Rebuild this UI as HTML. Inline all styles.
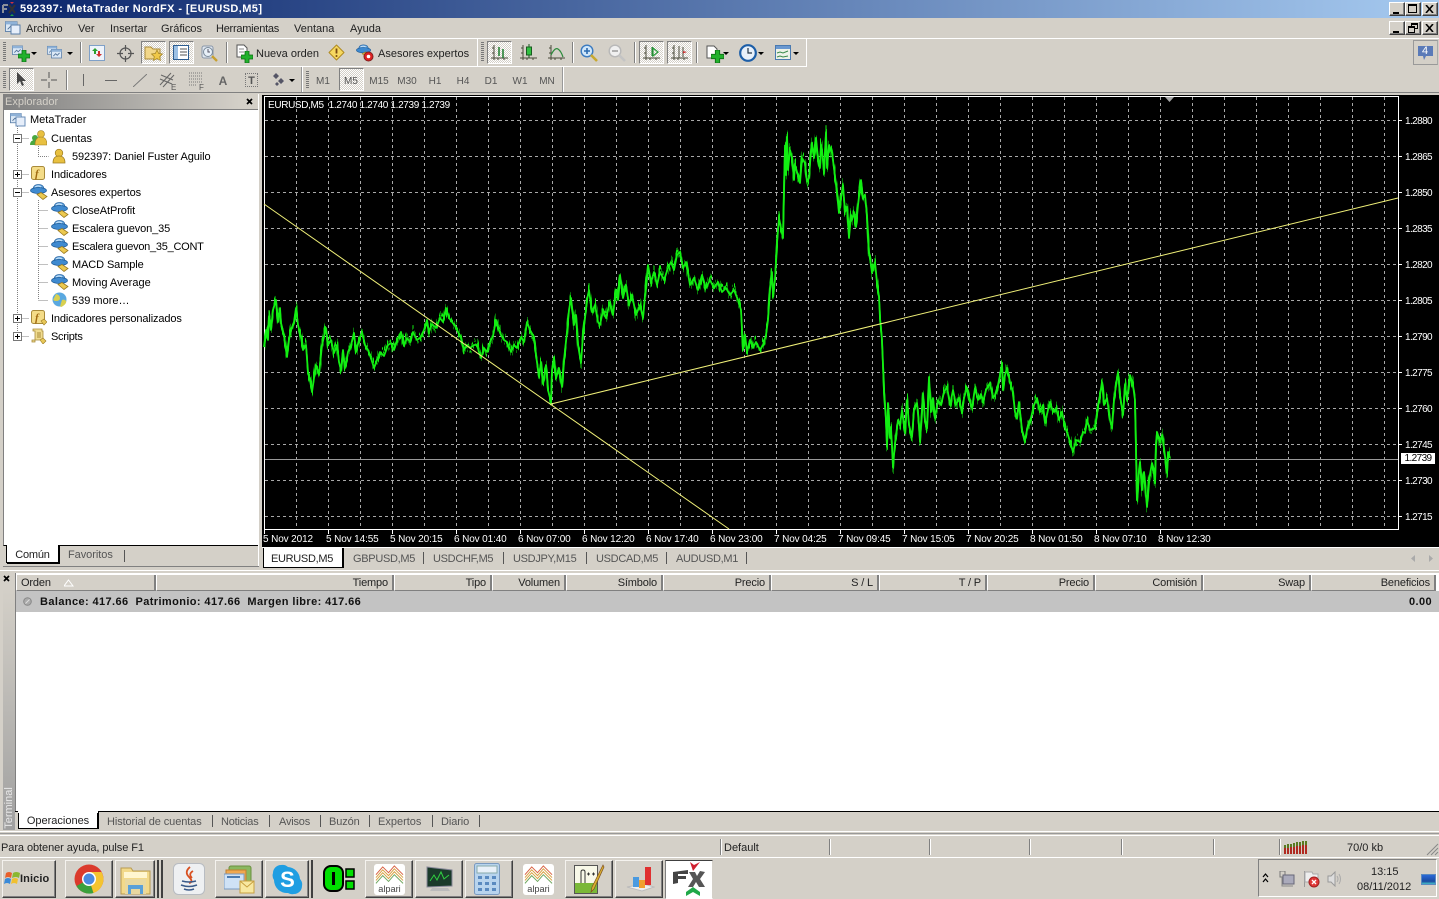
<!DOCTYPE html>
<html lang="es"><head><meta charset="utf-8"><title>MetaTrader</title>
<style>
html,body{margin:0;padding:0;width:1439px;height:899px;overflow:hidden;background:#d4d0c8}
body{position:relative;font:11px/14px "Liberation Sans",Arial,sans-serif;color:#000}
div,span,svg{position:absolute;box-sizing:border-box}
.t{white-space:nowrap;height:14px;line-height:14px;margin-top:1px}
.g{color:#555}
.r{text-align:right}
.c{text-align:center}
.cap{letter-spacing:-.5px}
.px{color:#fff;font-size:10px;letter-spacing:-.6px}
.dt{color:#fff;font-size:10px;letter-spacing:-.12px}
.wb{width:16px;height:14px;background:#d4d0c8;border:1px solid;border-color:#fff #404040 #404040 #fff;box-shadow:inset -1px -1px #808080}
.sep{width:2px;background:#808080;border-right:1px solid #fff}
.grip{width:3px;background:repeating-linear-gradient(#777 0 1px,#d4d0c8 1px 2px)}
.pr{border:1px solid;border-color:#808080 #fff #fff #808080;background:repeating-conic-gradient(#fff 0 25%,#d4d0c8 0 50%) 0 0/2px 2px}
.btn{border:1px solid;border-color:#f4f2ee #404040 #404040 #f4f2ee;box-shadow:inset -1px -1px #808080;background:#d4d0c8}
.hd{top:575px;height:16px;border-right:2px solid #808080;border-left:1px solid #fff;border-bottom:1px solid #808080;background:#d4d0c8;text-align:right;padding-right:4px;line-height:16px;color:#222;letter-spacing:-.15px}
.ar{width:0;height:0;border:3px solid transparent;border-top:3px solid #000;border-bottom:0}
.dv{width:1px;height:12px;background:#555}
</style></head>
<body>
<svg width="0" height="0" style="left:0;top:0">
<defs>
<symbol id="ea" viewBox="0 0 18 16"><path d="M3 6Q3 .5 8.500 .5T14 6Z" fill="#6fb0e6" stroke="#2f6aa6" stroke-width=".8"/><ellipse cx="8.500" cy="6.500" rx="8" ry="3" fill="#3f8ad0" stroke="#1d5a96" stroke-width=".7"/><path d="M5 3q3-2 6 0" stroke="#cfe6fa" fill="none"/><path d="M7 10.500l4-2 6 4-4 3z" fill="#ecc950" stroke="#9a7a20" stroke-width=".8"/></symbol>
<symbol id="plus" viewBox="0 0 12 12"><path d="M4 0h4v4h4v4H8v4H4V8H0V4h4z" fill="#22b12c" stroke="#0c6c14" stroke-width=".8"/></symbol>
<symbol id="chartdoc" viewBox="0 0 18 16"><rect x=".5" y="1.5" width="13" height="11" fill="#dbe8f6" stroke="#5a7ea8"/><rect x=".5" y="1.5" width="13" height="3" fill="#8fb2d8"/><path d="M3 10l3-3 2 2 3-3" stroke="#4a6a90" fill="none"/></symbol>
<symbol id="axis" viewBox="0 0 18 18"><path d="M3 1v15M0 14h17" stroke="#4a4a3a" fill="none"/><path d="M1 4h2M1 9h2M7 16v-2M13 16v-2" stroke="#4a4a3a"/></symbol>
<symbol id="alp" viewBox="0 0 32 32"><rect width="32" height="32" rx="3" fill="#fff"/><path d="M2 14l7-8 6 6 6-7 9 9M2 17l7-8 6 6 6-7 9 9" fill="none" stroke="#d8a040"/><path d="M2 11l7-8 6 6 6-7 9 9" fill="none" stroke="#d86040"/><path d="M2 20l7-8 6 6 6-7 9 9" fill="none" stroke="#70a860"/><text x="16" y="29" text-anchor="middle" font-family="Liberation Sans" font-size="9.5" fill="#444">alpari</text></symbol>
<filter id="jit" filterUnits="userSpaceOnUse" x="264" y="97" width="1000" height="432" color-interpolation-filters="sRGB"><feTurbulence type="turbulence" baseFrequency="0.55 0.002" numOctaves="2" seed="7" result="n"/><feColorMatrix in="n" type="matrix" values="2 0 0 0 0 0 0 0 0 .5 0 0 1 0 0 0 0 0 0 1" result="m"/><feDisplacementMap in="SourceGraphic" in2="m" scale="12" xChannelSelector="G" yChannelSelector="R"/></filter>
</defs></svg>

<!-- title bar -->
<div style="left:0;top:0;width:1439px;height:18px;background:linear-gradient(90deg,#0a246a,#a6caf0)"></div>
<svg style="left:1px;top:1px" width="17" height="16" viewBox="0 0 17 16"><path d="M2 4h5M2 4v8M2 8h4" stroke="#8a8f9a" stroke-width="2" fill="none"/><path d="M8 4l6 8M14 4l-6 8" stroke="#333" stroke-width="2"/><path d="M9 1l2 2 2-2z" fill="#d03040"/><path d="M9 15l2-2 2 2z" fill="#20a040"/></svg>
<div class="t" style="left:20px;top:1px;color:#fff;font-weight:bold;letter-spacing:.4px">592397: MetaTrader NordFX - [EURUSD,M5]</div>
<div class="wb" style="left:1389px;top:2px"><span style="left:3px;top:9px;width:6px;height:2px;background:#000"></span></div>
<div class="wb" style="left:1405px;top:2px"><span style="left:2px;top:1px;width:9px;height:9px;border:1px solid #000;border-top-width:2px"></span></div>
<div class="wb" style="left:1422px;top:2px"><svg style="left:2px;top:2px" width="9" height="8"><path d="M1 0l7 8M8 0l-7 8" stroke="#000" stroke-width="1.600"/></svg></div>

<!-- menu -->
<svg style="left:5px;top:20px" width="16" height="16" viewBox="0 0 16 16"><use href="#chartdoc" width="16" height="15"/><rect x="6" y="5" width="9" height="9" fill="#e6eefa" stroke="#5a7ea8"/></svg>
<div class="t" style="left:26px;top:21px;color:#222">Archivo</div>
<div class="t" style="left:78px;top:21px;color:#222">Ver</div>
<div class="t" style="left:110px;top:21px;color:#222">Insertar</div>
<div class="t" style="left:161px;top:21px;color:#222">Gráficos</div>
<div class="t" style="left:216px;top:21px;color:#222;letter-spacing:-.25px">Herramientas</div>
<div class="t" style="left:294px;top:21px;color:#222">Ventana</div>
<div class="t" style="left:350px;top:21px;color:#222">Ayuda</div>
<div class="wb" style="left:1389px;top:21px;height:14px"><span style="left:3px;top:9px;width:6px;height:2px;background:#000"></span></div>
<div class="wb" style="left:1405px;top:21px"><span style="left:5px;top:1px;width:7px;height:6px;border:1px solid #000;border-top-width:2px"></span><span style="left:2px;top:4px;width:7px;height:7px;border:1px solid #000;border-top-width:2px;background:#d4d0c8"></span></div>
<div class="wb" style="left:1422px;top:21px"><svg style="left:2px;top:2px" width="9" height="8"><path d="M1 0l7 8M8 0l-7 8" stroke="#000" stroke-width="1.600"/></svg></div>

<!-- toolbar lines -->
<div style="left:0;top:38px;width:1439px;height:1px;background:#fff"></div>
<div style="left:806px;top:39px;width:1px;height:28px;background:#fff"></div>
<div style="left:0;top:66px;width:806px;height:1px;background:#fff"></div>
<div style="left:562px;top:67px;width:2px;height:25px;background:#fff;border-left:1px solid #999"></div>
<div style="left:0;top:92px;width:1439px;height:1px;background:#808080"></div>

<div class="grip" style="left:3px;top:42px;height:20px"></div>
<svg style="left:12px;top:44px" width="18" height="18"><use href="#chartdoc" width="14" height="14"/><use href="#plus" x="6" y="6" width="12" height="12"/></svg><div class="ar" style="left:31px;top:52px"></div>
<svg style="left:47px;top:45px" width="18" height="16"><use href="#chartdoc" width="13" height="12"/><use href="#chartdoc" x="4" y="3" width="14" height="13"/></svg><div class="ar" style="left:67px;top:52px"></div>
<div class="sep" style="left:80px;top:42px;height:21px"></div>
<svg style="left:89px;top:45px" width="16" height="16"><rect x=".5" y=".5" width="15" height="15" fill="#eef3fa" stroke="#7fa0c8"/><path d="M6 3l-3 3h2v3h2V6h2z" fill="#2aa030"/><path d="M10 12l3-3h-2V6H9v3H7z" fill="#d03030"/></svg>
<svg style="left:117px;top:45px" width="17" height="17"><circle cx="8.500" cy="8.500" r="5.500" fill="none" stroke="#555" stroke-width="1.200"/><path d="M8.500 0v6M8.500 11v6M0 8.500h6M11 8.500h6" stroke="#555" stroke-width="1.200"/></svg>
<div class="pr" style="left:141px;top:41px;width:25px;height:23px"></div>
<svg style="left:144px;top:44px" width="20" height="18"><path d="M1 3h6l2 2h7v10H1z" fill="#f2d78a" stroke="#a88a3a"/><path d="M13 6l1.700 3.500 3.800.5-2.800 2.600.7 3.800-3.400-1.900-3.400 1.900.7-3.800-2.800-2.600 3.800-.5z" fill="#f0c848" stroke="#a08020" stroke-width=".7"/></svg>
<div class="pr" style="left:169px;top:41px;width:25px;height:23px"></div>
<svg style="left:173px;top:45px" width="17" height="16"><rect x=".5" y=".5" width="15" height="14" fill="#fff" stroke="#2c5c90"/><rect x="1" y="1" width="4" height="13" fill="#9cc0e4"/><path d="M7 4h7M7 7h7M7 10h7" stroke="#555"/></svg>
<svg style="left:201px;top:45px" width="18" height="18"><rect x="1" y="1" width="11" height="12" rx="2" fill="#dfe6ee" stroke="#8896a8"/><circle cx="7" cy="7" r="4.500" fill="#e8f0f8" stroke="#7a8a9a"/><path d="M7 4v3h2" stroke="#556" fill="none"/><path d="M11 11l5 5" stroke="#c8a030" stroke-width="2.400"/></svg>
<div class="sep" style="left:226px;top:42px;height:21px"></div>
<svg style="left:236px;top:44px" width="17" height="19"><path d="M1 1h7l3 3v9H1z" fill="#fff" stroke="#555"/><path d="M3 5h5M3 8h5" stroke="#888"/><use href="#plus" x="5" y="7" width="12" height="12"/></svg>
<div class="t" style="left:256px;top:46px;color:#222">Nueva orden</div>
<svg style="left:328px;top:44px" width="17" height="17"><path d="M8.500 1l7.500 7.500-7.500 7.500L1 8.500z" fill="#f6d860" stroke="#b08a20" stroke-linejoin="round"/><path d="M8.500 4.500v5" stroke="#7a4a10" stroke-width="1.800"/><circle cx="8.500" cy="12" r="1" fill="#7a4a10"/></svg>
<svg style="left:356px;top:44px" width="18" height="18"><use href="#ea" width="16" height="15"/><circle cx="12.500" cy="12.500" r="4.500" fill="#e02020" stroke="#802020"/><circle cx="12.500" cy="12.500" r="1.800" fill="#fff"/></svg>
<div class="t" style="left:378px;top:46px;color:#222">Asesores expertos</div>
<div style="left:477px;top:39px;width:1px;height:27px;background:#fff"></div>
<div class="grip" style="left:481px;top:42px;height:20px"></div>
<div class="pr" style="left:487px;top:41px;width:25px;height:23px"></div>
<svg style="left:491px;top:44px" width="18" height="18"><use href="#axis" width="18" height="18"/><path d="M8 3v9M12 5v9" stroke="#1a7a2a" stroke-width="1.500"/></svg>
<svg style="left:520px;top:44px" width="18" height="18"><use href="#axis" width="18" height="18"/><rect x="6.500" y="3" width="5" height="8" fill="#30c040" stroke="#1a5a20"/><path d="M9 0v3M9 11v3" stroke="#1a5a20"/></svg>
<svg style="left:548px;top:44px" width="18" height="18"><use href="#axis" width="18" height="18"/><path d="M3 11Q7 3 10 5t5 8" fill="none" stroke="#2a8a3a" stroke-width="1.200"/></svg>
<div class="sep" style="left:572px;top:42px;height:21px"></div>
<svg style="left:580px;top:44px" width="18" height="19"><circle cx="7" cy="7" r="5.800" fill="#cfe6fa" stroke="#3a7ac0" stroke-width="1.400"/><path d="M4 7h6M7 4v6" stroke="#2a6ab0" stroke-width="1.600"/><path d="M11 11l6 6" stroke="#c8a830" stroke-width="2.600"/></svg>
<svg style="left:608px;top:44px" width="18" height="19"><circle cx="7" cy="7" r="5.800" fill="#f0f0f0" stroke="#b8b8b8" stroke-width="1.400"/><path d="M4 7h6" stroke="#a0a0a0" stroke-width="1.600"/><path d="M11 11l6 6" stroke="#c4c4c4" stroke-width="2.600"/></svg>
<div class="sep" style="left:634px;top:42px;height:21px"></div>
<div class="pr" style="left:639px;top:41px;width:25px;height:23px"></div>
<svg style="left:643px;top:44px" width="18" height="18"><use href="#axis" width="18" height="18"/><path d="M9 3v9" stroke="#1a7a2a"/><path d="M10 4l5 4-5 4z" fill="none" stroke="#2a9a3a" stroke-width="1.200"/></svg>
<div class="pr" style="left:667px;top:41px;width:25px;height:23px"></div>
<svg style="left:671px;top:44px" width="18" height="18"><use href="#axis" width="18" height="18"/><path d="M8 2v12M12 3v10" stroke="#4a4a3a"/><path d="M12 7l4 1-4 1.500z" fill="#c83030"/></svg>
<div class="sep" style="left:696px;top:42px;height:21px"></div>
<svg style="left:706px;top:44px" width="20" height="20"><path d="M1 2h7l3 3v9H1z" fill="#fff" stroke="#555"/><use href="#plus" x="5" y="6" width="13" height="13"/></svg><div class="ar" style="left:723px;top:52px"></div>
<svg style="left:739px;top:44px" width="18" height="18"><circle cx="9" cy="9" r="7.800" fill="#e8f0fa" stroke="#1c5ea8" stroke-width="2.200"/><path d="M9 4v5h4" stroke="#234" fill="none" stroke-width="1.200"/></svg><div class="ar" style="left:758px;top:52px"></div>
<svg style="left:775px;top:45px" width="17" height="15"><rect x=".5" y=".5" width="15" height="14" fill="#eef2e8" stroke="#4a7ab0"/><rect x="1" y="1" width="14" height="3" fill="#6a98d0"/><path d="M2 8l3-1 3 1 5-2M2 12l3-1 3 1 5-1" stroke="#3a8a4a" fill="none"/></svg><div class="ar" style="left:793px;top:52px"></div>

<div style="left:1413px;top:40px;width:25px;height:25px;border:1px solid #999;border-right-color:#aaa"></div>
<svg style="left:1417px;top:45px" width="17" height="16"><path d="M1 1h15v10H9l-2 4-1-4H1z" fill="#5a7ab8"/></svg>
<div class="t c" style="left:1417px;top:43px;width:16px;color:#fff;font-size:11px">4</div>

<!-- toolbar 2 -->
<div class="grip" style="left:3px;top:71px;height:18px"></div>
<div class="pr" style="left:9px;top:68px;width:25px;height:23px"></div>
<svg style="left:16px;top:72px" width="12" height="15"><path d="M1 0v12l3-3 2 5 2-1-2-4h4z" fill="#444"/></svg>
<svg style="left:41px;top:72px" width="16" height="16"><path d="M8 0v6M8 10v6M0 8h6M10 8h6" stroke="#555"/></svg>
<div class="sep" style="left:66px;top:70px;height:20px"></div>
<div style="left:83px;top:74px;width:1px;height:12px;background:#666"></div>
<div style="left:105px;top:80px;width:12px;height:1px;background:#666"></div>
<svg style="left:133px;top:74px" width="14" height="13"><path d="M0 13L14 0" stroke="#777"/></svg>
<svg style="left:159px;top:71px" width="18" height="20"><path d="M1 14L12 2M4 16L15 4M1 8l12 5M2 4l12 5" stroke="#666" fill="none"/><text x="12" y="19" font-size="8" fill="#555" font-family="Liberation Sans">E</text></svg>
<svg style="left:187px;top:72px" width="18" height="19"><path d="M2 1h13M2 4h13M2 7h13M2 10h13M2 13h8" stroke="#777" stroke-dasharray="1 1"/><text x="12" y="18" font-size="8" fill="#555" font-family="Liberation Sans">F</text></svg>
<div class="t c" style="left:216px;top:73px;width:14px;font-weight:bold;font-size:12px;color:#666">A</div>
<div style="left:245px;top:73px;width:13px;height:14px;border:1px dotted #777"></div>
<div class="t c" style="left:245px;top:73px;width:13px;font-weight:bold;font-size:11px;color:#555">T</div>
<svg style="left:273px;top:73px" width="14" height="14"><path d="M3 0l3 3-3 3-3-3zM8 5l3 3-3 3-3-3zM4 9l2 2-2 2-2-2z" fill="#556"/></svg><div class="ar" style="left:289px;top:79px"></div>
<div style="left:301px;top:67px;width:2px;height:25px;background:#fff;border-left:1px solid #999"></div>
<div class="grip" style="left:306px;top:71px;height:18px"></div>
<div class="pr" style="left:339px;top:68px;width:25px;height:23px"></div>
<div class="t g c" style="left:310px;top:74px;width:26px;font-size:10px">M1</div>
<div class="t g c" style="left:338px;top:74px;width:26px;font-size:10px">M5</div>
<div class="t g c" style="left:366px;top:74px;width:26px;font-size:10px">M15</div>
<div class="t g c" style="left:394px;top:74px;width:26px;font-size:10px">M30</div>
<div class="t g c" style="left:422px;top:74px;width:26px;font-size:10px">H1</div>
<div class="t g c" style="left:450px;top:74px;width:26px;font-size:10px">H4</div>
<div class="t g c" style="left:478px;top:74px;width:26px;font-size:10px">D1</div>
<div class="t g c" style="left:507px;top:74px;width:26px;font-size:10px">W1</div>
<div class="t g c" style="left:534px;top:74px;width:26px;font-size:10px">MN</div>

<!-- explorer -->
<div style="left:3px;top:94px;width:239px;height:15px;background:linear-gradient(90deg,#808080,#d4d0c8)"></div>
<div class="t" style="left:5px;top:94px;color:#d4d0c8">Explorador</div>
<svg style="left:246px;top:98px" width="8" height="8"><path d="M1 1l5 5M6 1l-5 5" stroke="#000" stroke-width="1.700"/></svg>
<div style="left:3px;top:109px;width:256px;height:437px;background:#fff;border:1px solid;border-color:#808080 #fff #000 #808080"></div>
<div style="left:258px;top:94px;width:1px;height:472px;background:#fff"></div>
<!-- tree lines -->
<svg style="left:4px;top:110px" width="70" height="240">
<g stroke="#808080" stroke-dasharray="1 1" fill="none"><path d="M13.500 14v216M13.500 28.500h12M13.500 64.500h12M13.500 82.500h12M13.500 208.500h12M13.500 226.500h12M34.500 36v10.500h10M34.500 90v100M34.500 100.500h10M34.500 118.500h10M34.500 136.500h10M34.500 154.500h10M34.500 172.500h10M34.500 190.500h10"/></g>
</svg>
<svg style="left:13px;top:134px" width="9" height="9"><rect x=".5" y=".5" width="8" height="8" fill="#fff" stroke="#777"/><path d="M2 4.500h5" stroke="#000"/></svg>
<svg style="left:13px;top:170px" width="9" height="9"><rect x=".5" y=".5" width="8" height="8" fill="#fff" stroke="#777"/><path d="M2 4.500h5M4.500 2v5" stroke="#000"/></svg>
<svg style="left:13px;top:188px" width="9" height="9"><rect x=".5" y=".5" width="8" height="8" fill="#fff" stroke="#777"/><path d="M2 4.500h5" stroke="#000"/></svg>
<svg style="left:13px;top:314px" width="9" height="9"><rect x=".5" y=".5" width="8" height="8" fill="#fff" stroke="#777"/><path d="M2 4.500h5M4.500 2v5" stroke="#000"/></svg>
<svg style="left:13px;top:332px" width="9" height="9"><rect x=".5" y=".5" width="8" height="8" fill="#fff" stroke="#777"/><path d="M2 4.500h5M4.500 2v5" stroke="#000"/></svg>
<svg style="left:10px;top:112px" width="16" height="15"><use href="#chartdoc" width="15" height="14"/><rect x="6" y="5" width="9" height="9" fill="#e6eefa" stroke="#6a8eb8"/></svg>
<svg style="left:29px;top:129px" width="18" height="17"><circle cx="6" cy="9" r="3" fill="#4aa840"/><path d="M1 16q0-5 5-5t5 5z" fill="#4aa840"/><circle cx="12" cy="5" r="3.500" fill="#e8c040" stroke="#9a7a20" stroke-width=".6"/><path d="M6 16q0-8 6-8t6 8z" fill="#e8c040" stroke="#9a7a20" stroke-width=".6"/></svg>
<svg style="left:52px;top:148px" width="15" height="16"><circle cx="7" cy="5" r="3.800" fill="#e8c040" stroke="#9a7a20" stroke-width=".7"/><path d="M1 15q0-7 6-7t6 7z" fill="#e8c040" stroke="#9a7a20" stroke-width=".7"/></svg>
<svg style="left:31px;top:166px" width="15" height="15"><rect x=".5" y=".5" width="13" height="13" rx="2" fill="#f4dc88" stroke="#a88a3a"/><text x="4" y="11" font-family="Liberation Serif" font-style="italic" font-weight="bold" font-size="11" fill="#a06a10">f</text></svg>
<svg style="left:30px;top:184px" width="18" height="16"><use href="#ea" width="18" height="16"/></svg>
<svg style="left:51px;top:202px" width="18" height="16"><use href="#ea" width="18" height="16"/></svg>
<svg style="left:51px;top:220px" width="18" height="16"><use href="#ea" width="18" height="16"/></svg>
<svg style="left:51px;top:238px" width="18" height="16"><use href="#ea" width="18" height="16"/></svg>
<svg style="left:51px;top:256px" width="18" height="16"><use href="#ea" width="18" height="16"/></svg>
<svg style="left:51px;top:274px" width="18" height="16"><use href="#ea" width="18" height="16"/></svg>
<svg style="left:52px;top:292px" width="15" height="15"><circle cx="7.500" cy="7.500" r="7" fill="#5aa8e0"/><path d="M4 2q4 1 4 4t-4 3-2-3zM10 8q3-1 4 1t-3 5-2-3z" fill="#d8d050"/></svg>
<svg style="left:31px;top:310px" width="16" height="16"><rect x=".5" y=".5" width="13" height="13" rx="2" fill="#f4dc88" stroke="#a88a3a"/><text x="4" y="11" font-family="Liberation Serif" font-style="italic" font-weight="bold" font-size="11" fill="#a06a10">f</text><path d="M10 11l3-2 3 3-3 3z" fill="#e8c858" stroke="#9a7a20" stroke-width=".6"/></svg>
<svg style="left:31px;top:328px" width="16" height="16"><path d="M2 1h9v2h1v9H4v2H1v-2h3V3H2z" fill="#f0dc90" stroke="#a88a3a" stroke-width=".8"/><path d="M6 5h4M6 7h4M6 9h4" stroke="#a88a3a"/><path d="M9 12l3-2 3 3-3 3z" fill="#e8c858" stroke="#9a7a20" stroke-width=".6"/></svg>
<div class="t" style="left:30px;top:112px">MetaTrader</div>
<div class="t" style="left:51px;top:131px">Cuentas</div>
<div class="t" style="left:72px;top:149px;letter-spacing:-.1px">592397: Daniel Fuster Aguilo</div>
<div class="t" style="left:51px;top:167px;letter-spacing:-.1px">Indicadores</div>
<div class="t" style="left:51px;top:185px;letter-spacing:-.06px">Asesores expertos</div>
<div class="t" style="left:72px;top:203px;letter-spacing:-.08px">CloseAtProfit</div>
<div class="t" style="left:72px;top:221px;letter-spacing:-.12px">Escalera guevon_35</div>
<div class="t" style="left:72px;top:239px;letter-spacing:-.26px">Escalera guevon_35_CONT</div>
<div class="t" style="left:72px;top:257px;letter-spacing:-.1px">MACD Sample</div>
<div class="t" style="left:72px;top:275px">Moving Average</div>
<div class="t" style="left:72px;top:293px">539 more…</div>
<div class="t" style="left:51px;top:311px;letter-spacing:-.12px">Indicadores personalizados</div>
<div class="t" style="left:51px;top:329px;letter-spacing:-.3px">Scripts</div>
<!-- explorer tabs -->
<div style="left:6px;top:545px;width:53px;height:18px;background:#fff;border:1px solid #000;border-top:0;box-shadow:1px 1px #000"></div>
<div class="t c" style="left:6px;top:547px;width:53px;color:#222;letter-spacing:-.2px">Común</div>
<div class="t g" style="left:68px;top:547px;letter-spacing:-.05px">Favoritos</div>
<div class="dv" style="left:124px;top:550px"></div>
<div style="left:3px;top:566px;width:256px;height:1px;background:#808080"></div>

<!-- chart -->
<div style="left:262px;top:95px;width:1177px;height:452px;background:#000"></div>
<svg style="left:262px;top:95px" width="1177" height="452" viewBox="262 95 1177 452">
<rect x="264.500" y="96.500" width="1134" height="433" fill="none" stroke="#fff"/>
<g stroke="#a8a8a8" stroke-dasharray="3 3" shape-rendering="crispEdges" fill="none">
<path d="M265 120.500H1398M265 156.500H1398M265 192.500H1398M265 228.500H1398M265 264.500H1398M265 300.500H1398M265 336.500H1398M265 372.500H1398M265 408.500H1398M265 444.500H1398M265 480.500H1398M265 516.500H1398"/>
<path d="M296.500 97V529M328.500 97V529M360.500 97V529M392.500 97V529M424.500 97V529M456.500 97V529M488.500 97V529M520.500 97V529M552.500 97V529M584.500 97V529M616.500 97V529M648.500 97V529M680.500 97V529M712.500 97V529M744.500 97V529M776.500 97V529M808.500 97V529M840.500 97V529M872.500 97V529M904.500 97V529M936.500 97V529M968.500 97V529M1000.500 97V529M1032.500 97V529M1064.500 97V529M1096.500 97V529M1128.500 97V529M1160.500 97V529M1192.500 97V529M1224.500 97V529M1256.500 97V529M1288.500 97V529M1320.500 97V529M1352.500 97V529M1384.500 97V529"/>
</g>
<g stroke="#fff" shape-rendering="crispEdges"><path d="M264.500 530v4M328.500 530v4M392.500 530v4M456.500 530v4M520.500 530v4M584.500 530v4M648.500 530v4M712.500 530v4M776.500 530v4M840.500 530v4M904.500 530v4M968.500 530v4M1032.500 530v4M1096.500 530v4M1160.500 530v4"/><path d="M1399 120.500h3M1399 156.500h3M1399 192.500h3M1399 228.500h3M1399 264.500h3M1399 300.500h3M1399 336.500h3M1399 372.500h3M1399 408.500h3M1399 444.500h3M1399 480.500h3M1399 516.500h3"/></g>
<path d="M265 459.500H1398" stroke="#999" shape-rendering="crispEdges"/>
<path d="M1165 97h9l-4.500 5z" fill="#a8a8a8"/>
<g fill="none" stroke="#12ee12" stroke-width="1.800" stroke-linejoin="round">
<polyline id="gl" points="264,347 266,330 268,340 269,317 271,330 273,310 276,300 278,322 280,308 281,323 284,335 286,350 287,357 289,340 291,330 294,322 296,308 298,325 301,337 303,350 306,345 308,372 310,380 312,392 314,378 316,365 319,375 322,345 326,328 328,345 331,340 334,353 337,345 339,362 341,370 343,350 345,368 348,352 351,345 354,333 356,352 359,340 362,332 365,345 368,350 371,358 374,368 377,360 380,352 384,356 388,345 391,343 394,350 398,338 401,332 404,346 407,338 410,342 413,332 417,340 420,338 424,330 427,320 429,332 432,324 436,328 440,318 443,322 446,308 449,318 452,322 455,326 458,332 461,337 464,350 467,345 470,348 474,345 477,345 479,352 481,358 484,348 487,352 490,342 493,336 496,320 498,328 501,335 504,340 507,342 511,352 514,345 517,348 521,337 524,342 527,322 530,330 534,337 536,355 539,377 541,362 543,384 546,365 548,390 551,402 552,370 554,357 556,378 559,368 562,387 564,360 567,332 569,310 571,298 574,325 576,315 578,345 581,363 583,335 585,318 587,300 589,290 592,312 595,305 598,322 600,325 603,310 606,318 610,302 613,315 616,290 618,300 620,275 623,298 626,285 629,305 632,295 636,315 640,305 643,318 646,285 648,265 651,282 654,272 657,285 660,272 664,280 668,268 671,262 674,270 677,255 680,252 683,268 686,262 690,285 694,278 698,290 702,275 706,288 710,280 714,288 718,282 722,292 726,288 730,295 734,290 738,300 741,310 743,350 745,335 747,352 750,340 753,348 756,342 760,350 763,345 766,335 768,320 770,290 772,272 773,295 775,280 777,243 779,218 781,228 783,238 785,148 786,175 787,137 788,170 790,150 792,157 794,180 795,165 797,172 800,183 802,158 805,163 807,182 809,178 811,150 812,143 814,158 816,138 818,158 820,168 821,145 822,150 824,172 826,132 827,168 829,145 832,153 834,168 837,193 839,213 841,198 843,185 845,212 847,207 849,238 851,215 852,220 854,212 856,227 858,205 861,180 863,198 865,195 867,215 868,237 869,253 871,265 872,273 875,262 877,283 879,297 880,318 882,340 884,390 886,420 887,447 888,403 890,438 891,428 893,467 895,443 898,420 900,425 902,410 905,433 907,400 909,425 912,437 914,410 917,403 919,425 920,442 923,393 925,420 927,428 929,377 931,412 933,398 935,418 938,400 941,405 944,392 947,387 950,405 953,390 956,405 959,398 962,413 964,398 967,388 970,402 972,408 975,388 978,400 981,394 983,402 986,390 990,383 993,398 995,395 998,385 1000,375 1002,363 1003,390 1005,375 1007,368 1010,382 1013,393 1015,412 1017,417 1019,402 1022,430 1025,440 1028,425 1031,418 1034,405 1037,398 1040,412 1043,405 1045,423 1048,410 1050,402 1053,412 1056,408 1059,420 1062,412 1065,427 1068,435 1071,445 1073,452 1076,440 1080,442 1083,432 1085,433 1087,420 1090,430 1095,428 1098,405 1100,395 1102,382 1104,405 1107,398 1110,420 1112,428 1114,400 1116,385 1118,372 1120,395 1123,415 1125,385 1127,400 1130,375 1133,385 1135,400 1136,450 1137,500 1139,470 1140,462 1142,490 1144,472 1147,507 1149,480 1152,463 1154,470 1155,483 1156,445 1157,432 1159,438 1160,442 1162,435 1164,448 1167,473 1168,452 1170,458"/>
<use href="#gl" filter="url(#jit)"/>
</g>
<path d="M264 204L729 529M551 404L1398 198" stroke="#f0f078" fill="none" stroke-width="1"/>
</svg>
<div class="t" style="left:268px;top:98px;color:#fff;font-size:10px;letter-spacing:-.35px;white-space:pre">EURUSD,M5  1.2740 1.2740 1.2739 1.2739</div>
<div class="t px" style="left:1405px;top:114px">1.2880</div>
<div class="t px" style="left:1405px;top:150px">1.2865</div>
<div class="t px" style="left:1405px;top:186px">1.2850</div>
<div class="t px" style="left:1405px;top:222px">1.2835</div>
<div class="t px" style="left:1405px;top:258px">1.2820</div>
<div class="t px" style="left:1405px;top:294px">1.2805</div>
<div class="t px" style="left:1405px;top:330px">1.2790</div>
<div class="t px" style="left:1405px;top:366px">1.2775</div>
<div class="t px" style="left:1405px;top:402px">1.2760</div>
<div class="t px" style="left:1405px;top:438px">1.2745</div>
<div class="t px" style="left:1405px;top:474px">1.2730</div>
<div class="t px" style="left:1405px;top:510px">1.2715</div>
<div class="t c px" style="left:1401px;top:452px;width:34px;height:11px;line-height:11px;background:#fff;color:#000">1.2739</div>
<div class="t dt" style="left:263px;top:532px">5 Nov 2012</div>
<div class="t dt" style="left:326px;top:532px">5 Nov 14:55</div>
<div class="t dt" style="left:390px;top:532px">5 Nov 20:15</div>
<div class="t dt" style="left:454px;top:532px">6 Nov 01:40</div>
<div class="t dt" style="left:518px;top:532px">6 Nov 07:00</div>
<div class="t dt" style="left:582px;top:532px">6 Nov 12:20</div>
<div class="t dt" style="left:646px;top:532px">6 Nov 17:40</div>
<div class="t dt" style="left:710px;top:532px">6 Nov 23:00</div>
<div class="t dt" style="left:774px;top:532px">7 Nov 04:25</div>
<div class="t dt" style="left:838px;top:532px">7 Nov 09:45</div>
<div class="t dt" style="left:902px;top:532px">7 Nov 15:05</div>
<div class="t dt" style="left:966px;top:532px">7 Nov 20:25</div>
<div class="t dt" style="left:1030px;top:532px">8 Nov 01:50</div>
<div class="t dt" style="left:1094px;top:532px">8 Nov 07:10</div>
<div class="t dt" style="left:1158px;top:532px">8 Nov 12:30</div>
<div style="left:262px;top:547px;width:1177px;height:1px;background:#fff"></div>

<!-- chart tabs -->
<div style="left:263px;top:548px;width:80px;height:20px;background:#fff;border:1px solid #000;border-top:0;box-shadow:1px 0 #000"></div>
<div class="t c cap" style="left:263px;top:551px;width:78px;color:#222;letter-spacing:-.3px">EURUSD,M5</div>
<div class="t g cap" style="left:353px;top:551px;letter-spacing:-.3px">GBPUSD,M5</div><div class="dv" style="left:423px;top:552px"></div>
<div class="t g cap" style="left:433px;top:551px;letter-spacing:-.3px">USDCHF,M5</div><div class="dv" style="left:503px;top:552px"></div>
<div class="t g cap" style="left:513px;top:551px;letter-spacing:-.3px">USDJPY,M15</div><div class="dv" style="left:586px;top:552px"></div>
<div class="t g cap" style="left:596px;top:551px;letter-spacing:-.3px">USDCAD,M5</div><div class="dv" style="left:666px;top:552px"></div>
<div class="t g cap" style="left:676px;top:551px;letter-spacing:-.3px">AUDUSD,M1</div><div class="dv" style="left:746px;top:552px"></div>
<svg style="left:1410px;top:555px" width="24" height="8"><path d="M5 0v7L1 3.500zM19 0v7l4-3.500z" fill="#aaa"/></svg>
<div style="left:0;top:570px;width:1439px;height:1px;background:#fff"></div>

<!-- terminal -->
<svg style="left:3px;top:575px" width="8" height="8"><path d="M1 1l5 5M6 1l-5 5" stroke="#000" stroke-width="1.700"/></svg>
<div style="left:3px;top:587px;width:12px;height:243px;background:linear-gradient(#d4d0c8,#a0a0a0)"></div>
<div class="t" style="left:2px;top:801px;width:14px;color:#e8e8e8;transform:rotate(-90deg);transform-origin:center;text-align:center"><span style="left:-14px;top:0;width:44px;text-align:center;color:#e8e8e8">Terminal</span></div>
<div style="left:15px;top:573px;width:1424px;height:238px;background:#fff;border-left:1px solid #808080"></div>
<div class="hd" style="left:16px;width:140px;text-align:left;padding-left:4px">Orden<svg style="left:47px;top:4px" width="10" height="8"><path d="M4.500 1L9 7H0z" fill="none" stroke="#fff"/></svg></div>
<div class="hd" style="left:156px;width:238px">Tiempo</div>
<div class="hd" style="left:394px;width:98px">Tipo</div>
<div class="hd" style="left:492px;width:74px">Volumen</div>
<div class="hd" style="left:566px;width:97px">Símbolo</div>
<div class="hd" style="left:663px;width:108px">Precio</div>
<div class="hd" style="left:771px;width:108px">S / L</div>
<div class="hd" style="left:879px;width:108px">T / P</div>
<div class="hd" style="left:987px;width:108px">Precio</div>
<div class="hd" style="left:1095px;width:108px">Comisión</div>
<div class="hd" style="left:1203px;width:108px">Swap</div>
<div class="hd" style="left:1311px;width:125px">Beneficios</div>
<div style="left:16px;top:591px;width:1423px;height:21px;background:#c3c3c3"></div>
<svg style="left:23px;top:597px" width="9" height="9"><circle cx="4.500" cy="4.500" r="3.800" fill="#aaa" stroke="#888"/><path d="M2.500 6.500l4-4" stroke="#ddd"/></svg>
<div class="t" style="left:40px;top:594px;font-weight:bold;color:#111;white-space:pre;letter-spacing:.4px">Balance: 417.66  Patrimonio: 417.66  Margen libre: 417.66</div>
<div class="t r" style="left:1380px;top:594px;width:52px;font-weight:bold;color:#111;letter-spacing:.4px">0.00</div>

<!-- terminal tabs -->
<div style="left:18px;top:811px;width:80px;height:18px;background:#fff;border:1px solid #000;border-top:0;box-shadow:1px 0 #000"></div>
<div class="t c" style="left:18px;top:813px;width:80px;color:#222">Operaciones</div>
<div style="left:15px;top:811px;width:1424px;height:1px;background:#000"></div>
<div style="left:18px;top:811px;width:80px;height:2px;background:#fff"></div>
<div class="t g" style="left:107px;top:814px;letter-spacing:-.1px">Historial de cuentas</div><div class="dv" style="left:212px;top:815px"></div>
<div class="t g" style="left:221px;top:814px;letter-spacing:-.2px">Noticias</div><div class="dv" style="left:269px;top:815px"></div>
<div class="t g" style="left:279px;top:814px;letter-spacing:-.2px">Avisos</div><div class="dv" style="left:320px;top:815px"></div>
<div class="t g" style="left:329px;top:814px;letter-spacing:-.1px">Buzón</div><div class="dv" style="left:369px;top:815px"></div>
<div class="t g" style="left:378px;top:814px">Expertos</div><div class="dv" style="left:432px;top:815px"></div>
<div class="t g" style="left:441px;top:814px;letter-spacing:-.1px">Diario</div><div class="dv" style="left:479px;top:815px"></div>
<div style="left:0;top:831px;width:1439px;height:1px;background:#fff"></div>
<div style="left:0;top:833px;width:1439px;height:1px;background:#999"></div>
<div style="left:0;top:835px;width:1439px;height:1px;background:#fff"></div>

<!-- status -->
<div class="t" style="left:1px;top:840px;color:#222;letter-spacing:-.07px">Para obtener ayuda, pulse F1</div>
<div class="t" style="left:724px;top:840px;color:#222">Default</div>
<div class="sep" style="left:720px;top:839px;height:16px"></div>
<div class="sep" style="left:829px;top:839px;height:16px"></div>
<div class="sep" style="left:929px;top:839px;height:16px"></div>
<div class="sep" style="left:1029px;top:839px;height:16px"></div>
<div class="sep" style="left:1121px;top:839px;height:16px"></div>
<div class="sep" style="left:1213px;top:839px;height:16px"></div>
<div class="sep" style="left:1279px;top:839px;height:16px"></div>
<svg style="left:1284px;top:841px" width="24" height="13"><g fill="#b02a20"><rect x="0" y="7" width="2" height="6"/><rect x="3" y="7" width="2" height="6"/><rect x="6" y="6" width="2" height="7"/><rect x="9" y="6" width="2" height="7"/><rect x="12" y="5" width="2" height="8"/><rect x="15" y="5" width="2" height="8"/><rect x="18" y="4" width="2" height="9"/><rect x="21" y="4" width="2" height="9"/></g><g fill="#5a7a20"><rect x="0" y="4" width="2" height="3"/><rect x="3" y="3" width="2" height="4"/><rect x="6" y="3" width="2" height="3"/><rect x="9" y="2" width="2" height="4"/><rect x="12" y="1" width="2" height="4"/><rect x="15" y="1" width="2" height="4"/><rect x="18" y="0" width="2" height="4"/><rect x="21" y="0" width="2" height="4"/></g></svg>
<div class="t" style="left:1347px;top:840px;color:#222">70/0 kb</div>
<svg style="left:1425px;top:842px" width="14" height="14"><path d="M13 2L2 13M13 6l-7 7M13 10l-3 3" stroke="#888"/></svg>
<div style="left:0;top:857px;width:1439px;height:1px;background:#fff"></div>

<!-- taskbar -->
<div class="btn" style="left:2px;top:860px;width:54px;height:38px"></div>
<svg style="left:4px;top:870px" width="17" height="17"><path d="M2 3q3-2 6 0l-1 5q-3-2-6 0z" fill="#e8602c"/><path d="M9 3q3-2 7 0l-1 5q-3-2-7 0z" fill="#8ab830"/><path d="M1 9q3-2 6 0l-1 5q-3-2-6 0z" fill="#3a8ad8"/><path d="M8 9q3-2 6 0l-1 5q-3-2-6 0z" fill="#f0c030"/></svg>
<div class="t" style="left:20px;top:871px;font-weight:bold;font-size:11px;color:#222;letter-spacing:.1px">Inicio</div>
<div class="btn" style="left:65px;top:860px;width:48px;height:38px"></div>
<svg style="left:74px;top:864px" width="30" height="30"><circle cx="15" cy="15" r="14.500" fill="#db3a2c"/><path d="M15 15L2.500 22a14.500 14.500 0 0 0 17 7z" fill="#3aa03c"/><path d="M15 15l4.500 14A14.500 14.500 0 0 0 27.500 8H15z" fill="#f4c430"/><circle cx="15" cy="15" r="7" fill="#fff"/><circle cx="15" cy="15" r="5.500" fill="#4a8ae0"/></svg>
<div class="btn" style="left:115px;top:860px;width:40px;height:38px"></div>
<div style="left:157px;top:860px;width:2px;height:38px;background:#404040"></div>
<div style="left:161px;top:860px;width:2px;height:38px;background:#404040"></div>
<svg style="left:120px;top:864px" width="31" height="31"><path d="M1 4h10l2 3h17v23H1z" fill="#f2d98a" stroke="#b89a50"/><rect x="4" y="8" width="23" height="6" fill="#fff6d0"/><rect x="5" y="15" width="21" height="15" fill="#e8d8a0"/><path d="M8 21h15v9h-3v-5h-9v5H8z" fill="#5aa0d8"/></svg>
<svg style="left:173px;top:863px" width="32" height="32"><rect x=".5" y=".5" width="31" height="31" rx="5" fill="#eef0f2" stroke="#b8bcc2"/><path d="M17 4q-6 5-1 10t0 6M20 8q-5 3-1 7" fill="none" stroke="#d85020" stroke-width="1.800"/><path d="M9 18q7 2 14 0M8 22q8 3 16 0M11 26q5 2 10 0" fill="none" stroke="#3a5a8a" stroke-width="1.500"/></svg>
<div class="btn" style="left:215px;top:860px;width:48px;height:38px"></div>
<svg style="left:224px;top:865px" width="31" height="29"><rect x="5" y="1" width="22" height="20" rx="2" fill="#8ab860" stroke="#6a9040"/><rect x="2" y="5" width="20" height="18" fill="#f0a850" stroke="#c08030"/><rect x="0" y="9" width="20" height="15" fill="#cfe2f6" stroke="#7a9ac0"/><rect x="3" y="11" width="13" height="2" fill="#4a7ab0"/><rect x="16" y="16" width="14" height="12" fill="#f8e8a0" stroke="#c8a040"/><path d="M16 16l7 6 7-6" fill="none" stroke="#c8a040"/></svg>
<div class="btn" style="left:265px;top:860px;width:44px;height:38px"></div>
<div style="left:311px;top:860px;width:2px;height:38px;background:#404040"></div>
<svg style="left:272px;top:864px" width="31" height="31"><path d="M9 1a8 8 0 0 1 7 2 13 13 0 0 1 12 12 8 8 0 0 1 2 7 8 8 0 0 1-8 8 8 8 0 0 1-6-1A13 13 0 0 1 2 16 8 8 0 0 1 1 9a8 8 0 0 1 8-8z" fill="#1f9ee2"/><text x="15.500" y="23" text-anchor="middle" font-family="Liberation Sans" font-weight="bold" font-size="22" fill="#fff">S</text></svg>
<svg style="left:323px;top:865px" width="32" height="27"><rect x="1" y="1" width="19" height="25" rx="7" fill="#00e000" stroke="#000" stroke-width="2"/><rect x="9" y="7" width="3" height="13" fill="#000"/><rect x="23" y="4" width="8" height="8" fill="#00e000" stroke="#000" stroke-width="1.500"/><rect x="23" y="16" width="8" height="8" fill="#00e000" stroke="#000" stroke-width="1.500"/></svg>
<div class="btn" style="left:365px;top:860px;width:48px;height:38px"></div>
<svg style="left:374px;top:864px" width="31" height="31"><use href="#alp" width="31" height="31"/></svg>
<div class="btn" style="left:415px;top:860px;width:48px;height:38px"></div>
<svg style="left:424px;top:865px" width="30" height="28"><path d="M3 2l25 3v16l-25 1z" fill="#1a3a2a" stroke="#889"/><path d="M6 16l4-6 3 5 4-8 3 7 5-4" fill="none" stroke="#30d040"/><path d="M8 23h16l2 3H6z" fill="#bbb"/></svg>
<div class="btn" style="left:465px;top:860px;width:48px;height:38px"></div>
<svg style="left:474px;top:863px" width="26" height="32"><rect x=".5" y=".5" width="25" height="31" rx="2" fill="#b8d4ee" stroke="#7a9ac0"/><rect x="3" y="3" width="20" height="7" fill="#e8f0f8" stroke="#8aa"/><g fill="#5a8ac0"><rect x="4" y="13" width="4" height="3"/><rect x="11" y="13" width="4" height="3"/><rect x="18" y="13" width="4" height="3"/><rect x="4" y="19" width="4" height="3"/><rect x="11" y="19" width="4" height="3"/><rect x="18" y="19" width="4" height="3"/><rect x="4" y="25" width="4" height="3"/><rect x="11" y="25" width="4" height="3"/><rect x="18" y="25" width="4" height="3"/></g></svg>
<svg style="left:523px;top:864px" width="31" height="31"><use href="#alp" width="31" height="31"/></svg>
<div class="btn" style="left:565px;top:860px;width:48px;height:38px"></div>
<svg style="left:573px;top:863px" width="32" height="32"><rect x="1.500" y="2.500" width="23" height="28" fill="#f8f8e8" stroke="#555"/><rect x="2" y="20" width="22" height="10" fill="#7ab838"/><path d="M8 20V9q0-2 2-2t2 2v11" fill="none" stroke="#333"/><path d="M14 11h3M15.500 9.500v3M19 11h3M20.500 9.500v3" stroke="#333"/><path d="M30 2L19 24l-1 5 3-3L31 4z" fill="#d8b030" stroke="#805020" stroke-width=".7"/></svg>
<div class="btn" style="left:615px;top:860px;width:48px;height:38px"></div>
<svg style="left:625px;top:866px" width="30" height="26"><path d="M2 21l17-3 10 3-12 4z" fill="#eee" stroke="#bbb"/><rect x="8" y="11" width="6" height="10" fill="#4a9ae0"/><rect x="14" y="14" width="6" height="8" fill="#f0a030"/><rect x="20" y="1" width="6" height="18" fill="#e03030"/></svg>
<div style="left:665px;top:860px;width:48px;height:39px;background:#fff;border:1px solid;border-color:#404040 #d4d0c8 #fff #808080"></div>
<svg style="left:672px;top:862px" width="34" height="35"><path d="M18 0l4 3 6-3-7 9z" fill="#d02030"/><path d="M1 10l15-2v4H6v2h8v3H6v4l-5 1z" fill="#444"/><path d="M17 10h6l2 4 3-5 5 1-5 7 5 8h-6l-3-5-3 5h-5l5-8z" fill="#555"/><path d="M21 25l7 5v4l-7-4-7 4v-4z" fill="#20a848"/></svg>
<div style="left:1258px;top:859px;width:179px;height:38px;border:1px solid;border-color:#808080 #fff #fff #808080"></div>
<svg style="left:1262px;top:873px" width="7" height="10"><path d="M1 4l2.500-3L6 4M1 9l2.500-3L6 9" fill="none" stroke="#000" stroke-width="1.200"/></svg>
<svg style="left:1279px;top:871px" width="17" height="17"><rect x="1" y="0" width="5" height="6" fill="none" stroke="#777"/><rect x="4" y="4" width="11" height="9" fill="#aab" stroke="#667"/><path d="M3 6v9h11" stroke="#888" fill="none"/></svg>
<svg style="left:1303px;top:870px" width="17" height="18"><path d="M1.500 1v16" stroke="#999"/><path d="M2 2h7l1 2h5v8H4l-2 0z" fill="#eee" stroke="#aaa"/><circle cx="11" cy="12" r="5" fill="#e03838" stroke="#a02020"/><path d="M9 10l4 4M13 10l-4 4" stroke="#fff" stroke-width="1.300"/></svg>
<svg style="left:1327px;top:871px" width="16" height="16"><path d="M1 5h3l4-4v14l-4-4H1z" fill="#ddd" stroke="#999"/><path d="M10 5q2 3 0 6M12 3q3 5 0 10" fill="none" stroke="#aaa"/></svg>
<div class="t" style="left:1371px;top:864px;color:#222">13:15</div>
<div class="t" style="left:1357px;top:879px;color:#222">08/11/2012</div>
<div style="left:1421px;top:874px;width:15px;height:11px;background:linear-gradient(#2a6ad8,#1a4aa0 70%,#44c0c8);border:1px solid #5a8ac0"></div>
</body></html>
